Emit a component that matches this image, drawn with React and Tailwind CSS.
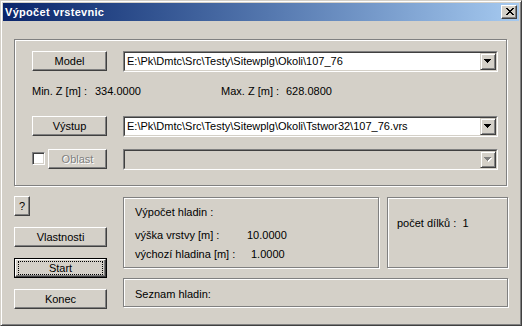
import React from "react";

function Button({ children, className = "", disabled = false }) {
  return (
    <div
      className={
        "flex items-center justify-center border border-t-white border-l-white border-r-[#404040] border-b-[#404040] shadow-[inset_-1px_-1px_#808080] bg-[#d4d0c8] text-[11px] leading-[13px] " +
        className
      }
    >
      {disabled ? (
        <span className="text-[#808080] [text-shadow:1px_1px_0_#fff]">{children}</span>
      ) : (
        children
      )}
    </div>
  );
}

function Arrow({ disabled = false }) {
  const fill = disabled ? "#808080" : "#000";
  const rows = [
    [0, 7],
    [1, 5],
    [2, 3],
    [3, 1],
  ];
  return (
    <svg width="8" height="5" viewBox="0 0 8 5" shapeRendering="crispEdges">
      {disabled &&
        rows.map(([y, w]) => (
          <rect key={"s" + y} x={y + 1} y={y + 1} width={w} height="1" fill="#fff" />
        ))}
      {rows.map(([y, w]) => (
        <rect key={y} x={y} y={y} width={w} height="1" fill={fill} />
      ))}
    </svg>
  );
}

function Combo({ value = "", disabled = false }) {
  return (
    <div className="ml-[16px] flex h-[21px] w-[375px] border border-t-[#808080] border-l-[#808080] border-r-white border-b-white">
      <div
        className={
          "flex flex-1 items-stretch border border-t-[#404040] border-l-[#404040] border-r-[#d4d0c8] border-b-[#d4d0c8] " +
          (disabled ? "bg-[#d4d0c8]" : "bg-white")
        }
      >
        <div className="flex flex-1 items-center overflow-hidden whitespace-nowrap pl-[2px] text-[11px] leading-[13px]">
          {value}
        </div>
        <div className="flex w-[16px] items-center justify-center border border-t-[#d4d0c8] border-l-[#d4d0c8] border-r-[#404040] border-b-[#404040] bg-[#d4d0c8] shadow-[inset_1px_1px_#fff,inset_-1px_-1px_#808080]">
          <Arrow disabled={disabled} />
        </div>
      </div>
    </div>
  );
}

function CloseGlyph() {
  const px = [
    [0, 0], [1, 0], [6, 0], [7, 0],
    [1, 1], [2, 1], [5, 1], [6, 1],
    [2, 2], [3, 2], [4, 2], [5, 2],
    [3, 3], [4, 3],
    [2, 4], [3, 4], [4, 4], [5, 4],
    [1, 5], [2, 5], [5, 5], [6, 5],
    [0, 6], [1, 6], [6, 6], [7, 6],
  ];
  return (
    <svg width="8" height="7" viewBox="0 0 8 7" shapeRendering="crispEdges">
      {px.map(([x, y]) => (
        <rect key={x + "-" + y} x={x} y={y} width="1" height="1" fill="#000" />
      ))}
    </svg>
  );
}

export default function App() {
  return (
    <div className="flex h-[326px] w-[522px] flex-col border border-t-[#d4d0c8] border-l-[#d4d0c8] border-r-[#404040] border-b-[#404040] bg-[#d4d0c8] p-[2px] font-['Liberation_Sans',Arial,sans-serif] text-[11px] leading-[13px] text-black shadow-[inset_1px_1px_#fff,inset_-1px_-1px_#808080]">
      {/* Title bar */}
      <div className="flex h-[18px] items-center bg-linear-to-r from-[#0a246a] to-[#a6caf0] pl-[2px] pr-[2px]">
        <span className="flex-1 text-[11px] font-bold leading-[13px] tracking-[0.3px] text-white">Výpočet vrstevnic</span>
        <div className="flex h-[14px] w-[16px] items-center justify-center border border-t-white border-l-white border-r-[#404040] border-b-[#404040] bg-[#d4d0c8] pb-[1px] pl-[1px] shadow-[inset_-1px_-1px_#808080]">
          <CloseGlyph />
        </div>
      </div>

      {/* Body */}
      <div className="flex flex-col pl-[11px] pt-[18px]">
        {/* Main group */}
        <div className="flex h-[147px] w-[493px] flex-col border border-[#808080] pl-[17px] pt-[11px] shadow-[inset_1px_1px_#fff,1px_1px_#fff]">
          <div className="flex items-start">
            <Button className="h-[20px] w-[75px]">Model</Button>
            <Combo value="E:\Pk\Dmtc\Src\Testy\Sitewplg\Okoli\107_76" />
          </div>
          <div className="mt-[13px] flex h-[13px] items-center whitespace-nowrap">
            <span className="w-[63px]">Min. Z [m] :</span>
            <span className="w-[126px]">334.0000</span>
            <span className="w-[65px]">Max. Z [m] :</span>
            <span>628.0800</span>
          </div>
          <div className="mt-[18px] flex items-start">
            <Button className="h-[20px] w-[75px]">Výstup</Button>
            <Combo value="E:\Pk\Dmtc\Src\Testy\Sitewplg\Okoli\Tstwor32\107_76.vrs" />
          </div>
          <div className="mt-[12px] flex items-start">
            <div className="mt-[3px] h-[13px] w-[13px] border border-t-[#808080] border-l-[#808080] border-r-white border-b-white bg-white shadow-[inset_1px_1px_#404040,inset_-1px_-1px_#d4d0c8]" />
            <Button className="ml-[3px] h-[20px] w-[59px]" disabled>
              Oblast
            </Button>
            <Combo disabled />
          </div>
        </div>

        {/* Bottom area */}
        <div className="flex">
          <div className="flex w-[93px] flex-col pt-[10px]">
            <Button className="h-[20px] w-[16px]">?</Button>
            <Button className="mt-[11px] h-[20px] w-[93px]">Vlastnosti</Button>
            <div className="mt-[11px] flex h-[20px] w-[93px] border border-black">
              <div className="relative flex flex-1 items-center justify-center border border-t-white border-l-white border-r-[#404040] border-b-[#404040] bg-[#d4d0c8] shadow-[inset_-1px_-1px_#808080]">
                <div className="absolute inset-x-[2px] inset-y-[1px] border border-dotted border-black" />
                <span className="relative">Start</span>
              </div>
            </div>
            <Button className="mt-[11px] h-[20px] w-[93px]">Konec</Button>
          </div>

          <div className="ml-[16px] flex flex-col pt-[11px]">
            <div className="flex">
              <div className="flex h-[71px] w-[256px] flex-col border border-[#808080] pl-[11px] pt-[8px] whitespace-nowrap shadow-[inset_1px_1px_#fff,1px_1px_#fff]">
                <div className="h-[13px]">Výpočet hladin :</div>
                <div className="mt-[10px] flex h-[13px]">
                  <span className="w-[112px]">výška vrstvy [m] :</span>
                  <span>10.0000</span>
                </div>
                <div className="mt-[6px] flex h-[13px]">
                  <span className="w-[116px]">výchozí hladina [m] :</span>
                  <span>1.0000</span>
                </div>
              </div>
              <div className="ml-[8px] flex h-[71px] w-[121px] flex-col border border-[#808080] pl-[9px] pt-[19px] whitespace-nowrap shadow-[inset_1px_1px_#fff,1px_1px_#fff]">
                <div className="h-[13px]">počet dílků :&nbsp; 1</div>
              </div>
            </div>
            <div className="mt-[10px] flex h-[29px] w-[385px] flex-col border border-[#808080] pl-[11px] pt-[9px] whitespace-nowrap shadow-[inset_1px_1px_#fff,1px_1px_#fff]">
              <div className="h-[13px]">Seznam hladin:</div>
            </div>
          </div>
        </div>
      </div>
    </div>
  );
}
